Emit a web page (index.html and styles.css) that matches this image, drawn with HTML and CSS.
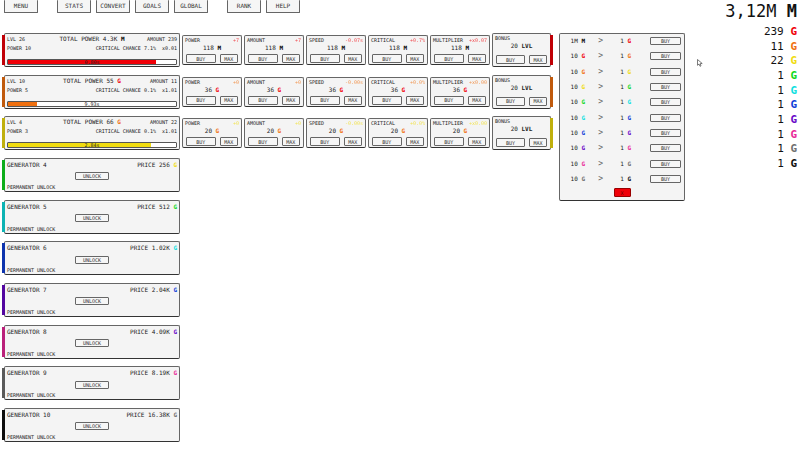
FILE: index.html
```html
<!DOCTYPE html>
<html lang="en">
<head>
    <meta charset="UTF-8">
    <meta name="viewport" content="width=device-width, initial-scale=1.0">
    <title>Generators</title>
    <link rel="stylesheet" href="styles.css">
</head>
<body>

<main class="game">
    <nav class="menu">
        <button>MENU</button>
        <button class="group-start">STATS</button>
        <button>CONVERT</button>
        <button>GOALS</button>
        <button>GLOBAL</button>
        <button class="group-start">RANK</button>
        <button>HELP</button>
    </nav>

    <div class="board">
        <div class="generators" id="generators"></div>

        <section class="convert">
            <ul id="convert-list"></ul>
            <button class="close">X</button>
        </section>
    </div>
</main>

<aside class="wallet">
    <h1>3,12M <b>M</b></h1>
    <ul id="wallet-list"></ul>
</aside>

<svg class="cursor" viewBox="0 0 6 8" aria-hidden="true">
    <path d="M0.5 0.5 L0.5 6.3 L2 5 L3 7.3 L4 6.8 L3.2 4.6 L5.2 4.5 Z" fill="#fff" stroke="#444" stroke-width="0.7"/>
</svg>

<script src="script.js"></script>
</body>
</html>
```
FILE: script.js
```js
// colour classes, from the first tier to the last; "m" is money
const tiers = ["m", "red", "orange", "yellow", "green", "cyan", "blue", "purple", "pink", "gray", "black"];
const amounts = [239, 11, 22, 1, 1, 1, 1, 1, 1, 1];

const active = [
    { tier: 1, level: 26, total: "4.3K", amount: 239, power: 10, crit: "7.1%", mult: "x0.01", time: "0.80s", fill: 88, cost: 118,
      steps: ["+7", "+7", "-0.07s", "+0.7%", "+x0.07"] },
    { tier: 2, level: 10, total: "55", amount: 11, power: 5, crit: "0.1%", mult: "x1.01", time: "9.93s", fill: 17, cost: 36,
      steps: ["+0", "+0", "-0.00s", "+0.0%", "+x0.00"] },
    { tier: 3, level: 4, total: "66", amount: 22, power: 3, crit: "0.1%", mult: "x1.01", time: "2.84s", fill: 85, cost: 20,
      steps: ["+0", "+0", "-0.00s", "+0.0%", "+x0.00"] }
];
const upgrades = ["POWER", "AMOUNT", "SPEED", "CRITICAL", "MULTIPLIER"];
const prices = ["256", "512", "1.02K", "2.04K", "4.09K", "8.19K", "16.38K"];

function coin(tier) {
    return `<b class="coin ${tiers[tier]}">${tier === 0 ? "M" : "G"}</b>`;
}

function activeRow(g) {
    const cards = upgrades.map((name, i) => `
        <section class="card upgrade">
            <div class="line"><span>${name}</span><span class="step">${g.steps[i]}</span></div>
            <p class="cost">${g.cost} ${coin(g.tier - 1)}</p>
            <div class="buttons"><button>BUY</button><button>MAX</button></div>
        </section>`).join("");

    return `
    <div class="row ${tiers[g.tier]}">
        <section class="card generator">
            <div class="line top">
                <span>LVL ${g.level}</span>
                <h2>TOTAL POWER ${g.total} ${coin(g.tier - 1)}</h2>
                <span class="end">AMOUNT ${g.amount}</span>
            </div>
            <div class="line">
                <span class="power">POWER ${g.power}</span>
                <span>CRITICAL CHANCE ${g.crit}</span>
                <span class="mult">${g.mult}</span>
            </div>
            <div class="bar"><div class="fill" style="width: ${g.fill}%"></div><span>${g.time}</span></div>
        </section>
        ${cards}
        <section class="card bonus">
            <div class="line"><span>BONUS</span></div>
            <p class="cost">20 <b>LVL</b></p>
            <div class="buttons"><button>BUY</button><button>MAX</button></div>
        </section>
    </div>`;
}

function lockedRow(price, i) {
    const tier = i + 4;
    return `
    <div class="row ${tiers[tier]}">
        <section class="card generator locked">
            <div class="line"><h2>GENERATOR ${tier}</h2><h2>PRICE ${price} ${coin(tier - 1)}</h2></div>
            <button>UNLOCK</button>
            <p>PERMANENT UNLOCK</p>
        </section>
    </div>`;
}

document.getElementById("generators").innerHTML =
    active.map(activeRow).join("") + prices.map(lockedRow).join("");

document.getElementById("convert-list").innerHTML = amounts.map((_, i) => `
    <li>
        <span class="from">${i === 0 ? "1M" : "10"} ${coin(i)}</span>
        <span class="arrow">&gt;</span>
        <span class="to">1 ${coin(i + 1)}</span>
        <button>BUY</button>
    </li>`).join("");

document.getElementById("wallet-list").innerHTML =
    amounts.map((n, i) => `<li>${n} ${coin(i + 1)}</li>`).join("");
```
FILE: styles.css
```css
* {
    box-sizing: border-box;
}

body {
    display: grid;
    grid-template-columns: minmax(0, 685fr) minmax(0, 115fr);
    min-height: 100vh;
    margin: 0;
    background: #fff;
    color: #222;
    font-family: "DejaVu Sans Mono", monospace;
    font-size: 5px;
    line-height: 6px;
}

h1, h2, p, ul {
    margin: 0;
    padding: 0;
    font-weight: normal;
    list-style: none;
}

h2 {
    font-size: 6px;
    line-height: 8px;
}

button {
    padding: 0;
    border: 1px solid #666;
    border-radius: 1px;
    background: #f6f6f6;
    color: #333;
    font: inherit;
    line-height: 6px;
    cursor: pointer;
}

/* tier colours */
.m { --tier: #000; }
.red { --tier: #f00008; }
.orange { --tier: #f07010; }
.yellow { --tier: #f0dc10; }
.green { --tier: #10d820; }
.cyan { --tier: #10e0e0; }
.blue { --tier: #1040d8; }
.purple { --tier: #6808c8; }
.pink { --tier: #e82898; }
.gray { --tier: #707070; }
.black { --tier: #101010; }

.coin {
    color: var(--tier);
}

.game {
    display: flex;
    flex-direction: column;
    padding: 0 0 8px 4px;
}

.menu {
    display: flex;
    gap: 5px;
    margin-bottom: 20px;
}

.menu button {
    width: 34px;
    height: 13px;
    border-top: 0;
    font-size: 6px;
}

.menu .group-start {
    margin-left: 14px;
}

.board {
    flex: 1;
    display: grid;
    grid-template-columns: minmax(0, 547fr) minmax(0, 126fr);
    gap: 8px;
}

.generators {
    display: flex;
    flex-direction: column;
    justify-content: space-between;
}

.row {
    display: grid;
    grid-template-columns: minmax(0, 176fr) repeat(5, minmax(0, 60fr)) minmax(0, 59fr);
    gap: 2px;
    align-items: center;
}

.card,
.convert {
    border: 1px solid #666;
    border-bottom-color: #333;
    border-radius: 2px;
    background: #f4f4f4;
}

.card {
    position: relative;
    padding: 1px 2px;
}

.line {
    display: flex;
    justify-content: space-between;
}

/* coloured tab at the outer edge of a row */
.generator::before,
.bonus::before {
    content: "";
    position: absolute;
    top: 1px;
    bottom: 1px;
    width: 3px;
    background: var(--tier);
    filter: brightness(0.8);
}

.generator::before {
    right: 100%;
}

.bonus::before {
    left: 100%;
}

.generator {
    display: flex;
    flex-direction: column;
    height: 34px;
}

.top {
    display: grid;
    grid-template-columns: 1fr auto 1fr;
    align-items: center;
    margin-bottom: 2px;
}

.end {
    text-align: right;
}

.power {
    margin-right: auto;
}

.mult {
    margin-left: 6px;
}

.bar {
    position: relative;
    height: 6px;
    margin-top: auto;
    border: 1px solid #555;
    border-radius: 1px;
    background: #fff;
}

.fill {
    height: 100%;
    background: var(--tier);
}

.bar span {
    position: absolute;
    inset: 0;
    line-height: 4px;
    text-align: center;
}

.locked {
    justify-content: space-between;
    padding-top: 2px;
}

.locked button {
    align-self: center;
    width: 34px;
    height: 8px;
}

.upgrade {
    height: 30px;
}

.bonus {
    height: 34px;
}

.step {
    color: var(--tier);
    opacity: 0.7;
}

.cost {
    font-size: 6px;
    line-height: 10px;
    text-align: center;
}

.buttons {
    display: flex;
    gap: 4px;
    padding: 1px 1px 0;
}

.buttons button {
    flex: 30;
    height: 9px;
}

.buttons button + button {
    flex: 18;
}

.bonus .buttons {
    padding-top: 4px;
}

.convert {
    align-self: start;
    display: flex;
    flex-direction: column;
    gap: 5px;
    padding: 3px;
    font-size: 6px;
}

.convert ul {
    display: flex;
    flex-direction: column;
    justify-content: space-between;
    min-height: 146px;
}

.convert li {
    display: grid;
    grid-template-columns: 22fr 28fr 18fr 19fr 31fr;
    line-height: 8px;
}

.convert li span {
    text-align: right;
}

.convert li .arrow {
    padding-right: 10px;
    color: #666;
    font-size: 8px;
}

.convert li button {
    grid-column: 5;
    height: 8px;
    font-size: 5px;
}

.close {
    align-self: center;
    width: 17px;
    height: 9px;
    border-color: #900;
    background: #f00008;
    color: #600;
    font-size: 5px;
}

.wallet {
    padding-right: 3px;
    color: #111;
    text-align: right;
}

.wallet h1 {
    padding-top: 1px;
    font-size: 17px;
    line-height: 20px;
}

.wallet ul {
    display: flex;
    flex-direction: column;
    justify-content: space-between;
    min-height: 146px;
    margin-top: 4px;
    font-size: 11px;
    line-height: 14px;
}

.cursor {
    position: absolute;
    left: 697px;
    top: 59px;
    width: 6px;
    height: 8px;
}
```
